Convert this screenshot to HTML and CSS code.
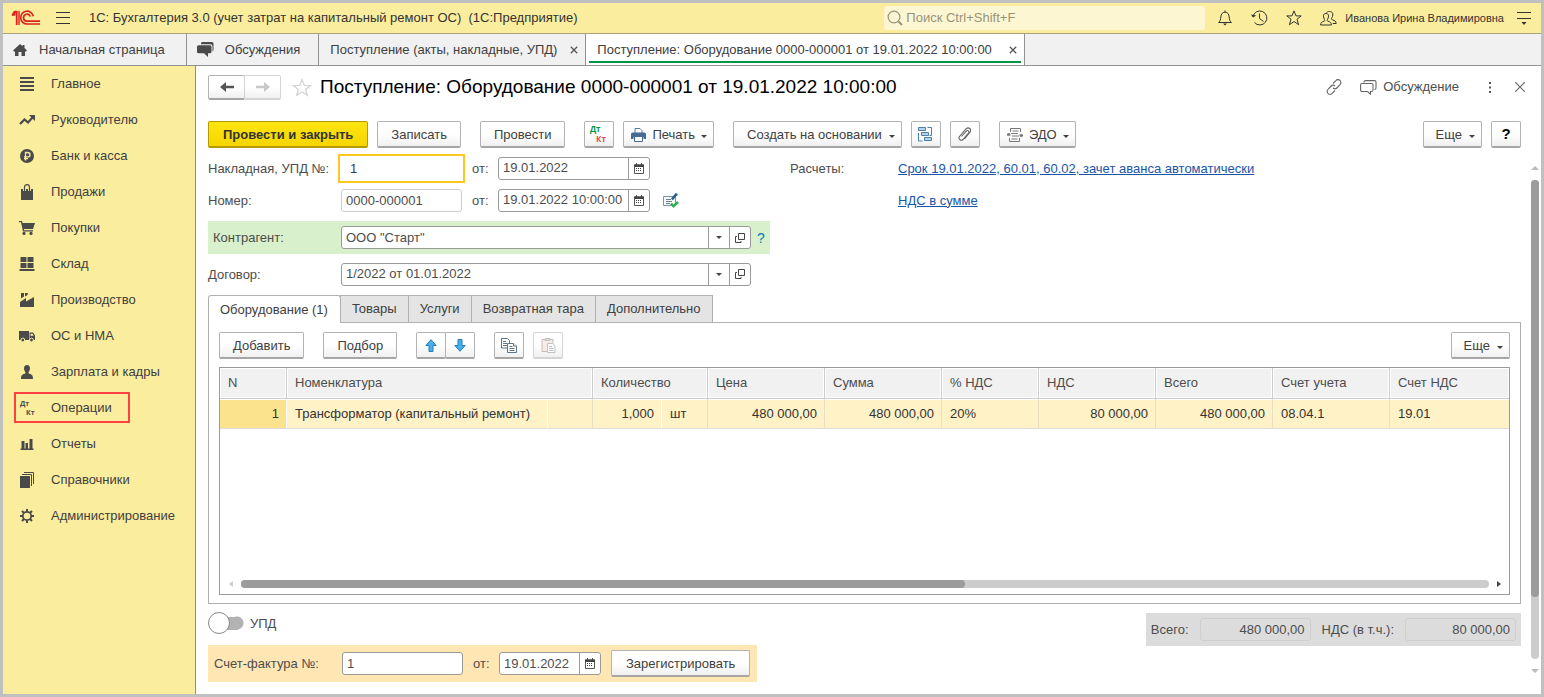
FILE: index.html
```html
<!DOCTYPE html>
<html lang="ru">
<head>
<meta charset="utf-8">
<title>1С: Бухгалтерия 3.0</title>
<link rel="stylesheet" href="styles.css">
</head>
<body>
<svg class="defs" aria-hidden="true">
  <symbol id="i-cal" viewBox="0 0 10 11"><path d="M.5 2h9v8.500h-9z" fill="none" stroke="#555"/><path d="M0 1.500h10v2.500H0zM2 0h1v2H2zM7 0h1v2H7z" fill="#444"/><path d="M2 5h1v1H2zM4 5h1v1H4zM6 5h1v1H6zM2 7h1v1H2zM4 7h1v1H4zM6 7h1v1H6z" fill="#444"/></symbol>
  <symbol id="i-open" viewBox="0 0 10 10"><path d="M3.500.5h6v6h-6zM2 3.500H.5v6h5.500V8" fill="none" stroke="#444"/></symbol>
  <symbol id="i-x" viewBox="0 0 8 8"><path d="M.8.8l6.400 6.400M7.200.8L.8 7.200" fill="none" stroke="#555" stroke-width="1.300"/></symbol>
</svg>
<div class="app">
  <header class="topbar">
    <svg class="logo" width="30" height="16" viewBox="0 0 30 16" fill="none" stroke="#d9231e"><path d="M.8 4.800h2.700v-3h2.200V15" stroke-width="1.800"/><path d="M8 .8v14.200" stroke-width="1.400"/><path d="M22.300 6.200A6.400 6.400 0 1 0 16 14h13" stroke-width="1.700"/><path d="M19.300 6.500A3.500 3.500 0 1 0 16 11.200h13" stroke-width="1.700"/><path d="M1.500 3.800L5.500.8" stroke-width="1.500"/></svg>
    <button class="bare" aria-label="Меню"><svg width="14" height="12" viewBox="0 0 14 12"><path d="M0 .5h14M0 5.500h14M0 11.500h14" stroke="#333"/></svg></button>
    <span class="app-name">1С: Бухгалтерия 3.0 (учет затрат на капитальный ремонт ОС)&nbsp; (1С:Предприятие)</span>
    <label class="search"><svg width="16" height="16" viewBox="0 0 16 16" fill="none" stroke="#999378" stroke-width="1.200"><circle cx="7" cy="7" r="5.900"/><path d="M11.500 11.500l3.500 3.500" stroke-width="2"/></svg><input type="search" aria-label="Поиск" placeholder="Поиск Ctrl+Shift+F"></label>
    <div class="top-icons">
      <button class="bare" aria-label="Уведомления"><svg width="16" height="16" viewBox="0 0 16 16" fill="none" stroke="#333"><path d="M8 .5v1.500M1.500 12.500h13c-2-1.500-2-3-2.300-5.500C12 4 10.500 2.200 8 2.200S4 4 3.800 7c-.3 2.500-.3 4-2.300 5.500z"/><path d="M6 13.500h4l-2 2z" fill="#333" stroke="none"/></svg></button>
      <button class="bare" aria-label="История"><svg width="17" height="16" viewBox="0 0 17 16" fill="none" stroke="#333"><path d="M2 6.500A7 7 0 1 1 3.500 12.500M8.500 3.500v5l4 3"/><path d="M0 4.500l2 3 3.300-2z" fill="#333" stroke="none"/></svg></button>
      <button class="bare" aria-label="Избранное"><svg width="16" height="16" viewBox="0 0 16 16" fill="none" stroke="#333"><path d="M8 .9l2 5h5.200l-4.200 3.300 1.600 5.500L8 11.500l-4.600 3.200L5 9.200.8 5.900H6z"/></svg></button>
      <button class="bare" aria-label="Пользователь"><svg width="17" height="15" viewBox="0 0 17 15" fill="none" stroke="#333"><path d="M.6 14c0-2.600 1.200-3 3.700-3.900.9-.4.500-1.200 0-2C2.800 5 3.300 2.500 6 2.500S9.200 5 7.700 8.100c-.5.800-.9 1.600 0 2 2.500.9 3.700 1.300 3.700 3.900z"/><path d="M6.500 1.500C8.500-.3 13.500.2 12.800 4c-.2 1.600-.5 2-1.100 3-.4.700-.3 1.400.5 1.700 2.700 1 3.900 1.300 4 3.800h-3.500"/></svg></button>
    </div>
    <span class="user">Иванова Ирина Владимировна</span>
    <button class="bare" aria-label="Настройки"><svg width="14" height="13" viewBox="0 0 14 13"><path d="M0 .5h14M0 6.500h14" stroke="#333"/><path d="M4.500 10h5L7 13z" fill="#333"/></svg></button>
  </header>

  <nav class="wintabs">
    <button class="wt wt-home"><svg width="14" height="12" viewBox="0 0 14 12" fill="#4a4a4a"><path d="M7 0L0 6.500 1 7.500h1V12h3.500V8h3v4H12V7.500h1l1-1L11.500 4V1h-2v1.200z"/></svg>Начальная страница</button>
    <button class="wt wt-talk"><svg width="17" height="15" viewBox="0 0 17 15" fill="#4a4a4a"><path d="M4 1.200Q4.200 0 5.500 0H15q1.500 0 1.500 1.500V8q0 1-1 1.400V4.500q0-2.300-2.300-2.300H4z"/><path d="M1.500 3.200H13q1.500 0 1.500 1.500v5q0 1.500-1.500 1.500h-2V15L7 11.200H1.500Q0 11.200 0 9.700v-5q0-1.500 1.500-1.500z"/></svg>Обсуждения</button>
    <button class="wt wt-list">Поступление (акты, накладные, УПД)<svg width="8" height="8"><use href="#i-x"/></svg></button>
    <button class="wt wt-on">Поступление: Оборудование 0000-000001 от 19.01.2022 10:00:00<svg width="8" height="8"><use href="#i-x"/></svg></button>
  </nav>

  <div class="body">
    <nav class="side">
      <a href="#"><svg width="14" height="14" viewBox="0 0 14 14"><path d="M0 1h14M0 5h14M0 9h14M0 13h14" stroke="#4a4a4a" stroke-width="2"/></svg>Главное</a>
      <a href="#"><svg width="16" height="10" viewBox="0 0 16 10"><path d="M1 9l4.500-4.500 3.500 3 5-5.500" fill="none" stroke="#4a4a4a" stroke-width="2.200"/><path d="M10 0h6v6z" fill="#4a4a4a"/></svg>Руководителю</a>
      <a href="#"><svg width="14" height="14" viewBox="0 0 14 14"><circle cx="7" cy="7" r="7" fill="#4a4a4a"/><path d="M5.500 11.500v-8h2.300a2.200 2.200 0 0 1 0 4.400H4M4 9.700h4" fill="none" stroke="#fbed9e" stroke-width="1.300"/></svg>Банк и касса</a>
      <a href="#"><svg width="12" height="16" viewBox="0 0 12 16"><path d="M0 5h12v11H0z" fill="#4a4a4a"/><path d="M3.500 7V3.500Q3.500 1 6 1t2.500 2.500V7" fill="none" stroke="#fbed9e" stroke-width="3"/><path d="M3.500 7.500v-4Q3.500.7 6 .7t2.500 2.800v4" fill="none" stroke="#4a4a4a" stroke-width="1.200"/></svg>Продажи</a>
      <a href="#"><svg width="16" height="14" viewBox="0 0 16 14" fill="#4a4a4a"><path d="M0 0h3l.6 2H16l-2 6H4.800l.3 1.200H14v1.300H4L2 1.300H0z"/><circle cx="5" cy="12.400" r="1.600"/><circle cx="12" cy="12.400" r="1.600"/></svg>Покупки</a>
      <a href="#"><svg width="15" height="14" viewBox="0 0 15 14" fill="#4a4a4a"><path d="M1 0h6v5H1zM8 0h6v5H8zM1 6h6v5H1zM8 6h6v5H8zM0 12h15v2H0z"/></svg>Склад</a>
      <a href="#"><svg width="14" height="14" viewBox="0 0 14 14" fill="#4a4a4a"><path d="M0 14V9l6-4v3.500L14 4v10zM1 0h3v3.500L1 5.500zM5 0h3L7.500 2 5 3.500z"/></svg>Производство</a>
      <a href="#"><svg width="16" height="12" viewBox="0 0 16 12"><path d="M0 1h10v9H0zM10.500 2.500H14l2 3V10h-5.500z" fill="#4a4a4a"/><path d="M11.500 3.700h2l1.200 2h-3.200z" fill="#fbed9e"/><g fill="#4a4a4a" stroke="#fbed9e"><circle cx="3.800" cy="10" r="1.900"/><circle cx="12.500" cy="10" r="1.900"/></g></svg>ОС и НМА</a>
      <a href="#"><svg width="12" height="14" viewBox="0 0 12 14" fill="#4a4a4a"><path d="M6 0c2 0 3 1.300 3 3.200S7.700 7 7.500 7.500s.2.900.8 1.200c2.500.8 3.700 1.300 3.700 5.300H0c0-4 1.200-4.500 3.700-5.300.6-.3 1-.7.8-1.200S3 5.100 3 3.200 4 0 6 0z"/></svg>Зарплата и кадры</a>
      <a href="#" class="marked"><svg class="dk" width="16" height="18" viewBox="0 0 16 18"><text x="1" y="7">Дт</text><text x="7" y="16">Кт</text></svg>Операции</a>
      <a href="#"><svg width="13" height="12" viewBox="0 0 13 12" fill="#4a4a4a"><path d="M0 10.500h13V12H0zM1 3h3v8H1zM5 5h2.500v6H5zM9 1h3v10H9z"/></svg>Отчеты</a>
      <a href="#"><svg width="14" height="16" viewBox="0 0 14 16"><path d="M0 4h10v12H0z" fill="#4a4a4a"/><path d="M2 2.500h9.500V14M4 .5h9.500V12" fill="none" stroke="#4a4a4a"/></svg>Справочники</a>
      <a href="#"><svg width="14" height="14" viewBox="0 0 14 14" fill="none" stroke="#4a4a4a"><circle cx="7" cy="7" r="4.200" stroke-width="1.800"/><path d="M7 0v2.500M7 11.500V14M0 7h2.500M11.500 7H14M2 2l2 2M10 10l2 2M12 2l-2 2M4 10l-2 2" stroke-width="2"/></svg>Администрирование</a>
    </nav>

    <main class="main">
      <div class="head">
        <div class="pair nav-pair">
          <button class="btn" aria-label="Назад"><svg width="14" height="10" viewBox="0 0 14 10"><path d="M0 5l6-5v3.700h8v2.600H6V10z" fill="#555"/></svg></button>
          <button class="btn dim" aria-label="Вперед"><svg width="14" height="10" viewBox="0 0 14 10"><path d="M14 5L8 0v3.700H0v2.600h8V10z" fill="#c8c8c8"/></svg></button>
        </div>
        <button class="bare star" aria-label="В избранное"><svg width="20" height="19" viewBox="0 0 20 19" fill="none" stroke="#d4d4d4" stroke-width="1.300"><path d="M10 1.500l2.300 5.800 6.200.2-4.900 3.900 1.800 6L10 14l-5.400 3.400 1.800-6L1.500 7.500l6.200-.2z"/></svg></button>
        <h1>Поступление: Оборудование 0000-000001 от 19.01.2022 10:00:00</h1>
        <div class="head-right">
          <button class="bare" aria-label="Ссылка"><svg width="16" height="16" viewBox="0 0 16 16" fill="none" stroke="#666" stroke-width="1.100"><path d="M7 4.500L9.700 1.800a2.700 2.700 0 0 1 4.500 0c1 1.500.7 2.900-.2 3.900L10.800 9c-1.200 1.200-2.800 1-3.800 0M9 11.500l-2.700 2.700a2.700 2.700 0 0 1-4.500 0c-1-1.500-.7-2.900.2-3.900L5.200 7c1.200-1.200 2.800-1 3.800 0"/></svg></button>
          <button class="bare talk"><svg width="17" height="15" viewBox="0 0 17 15" fill="none" stroke="#666" stroke-width="1.100"><path d="M4 2.500Q4 .6 5.500.6h9q1.500 0 1.500 1.500V8q0 1.500-1.500 1.500"/><path d="M2 3.500h9.500q1.500 0 1.500 1.500v5q0 1.500-1.500 1.500H10.500v2.700L7.500 11.500H2Q.6 11.500.6 10V5Q.6 3.500 2 3.500z"/></svg>Обсуждение</button>
          <button class="bare dots" aria-label="Еще"><svg width="3" height="11" viewBox="0 0 3 11" fill="#555"><path d="M0 0h2v2H0zM0 4.500h2v2H0zM0 9h2v2H0z"/></svg></button>
          <button class="bare" aria-label="Закрыть"><svg width="10" height="10" viewBox="0 0 10 10"><path d="M0 0l10 10M10 0L0 10" stroke="#666" stroke-width="1.100"/></svg></button>
        </div>
      </div>

      <div class="tools">
        <button class="btn main-btn">Провести и закрыть</button>
        <button class="btn">Записать</button>
        <button class="btn gap">Провести</button>
        <button class="btn icon gap" aria-label="Дт Кт"><svg class="dk dk-col" width="18" height="20" viewBox="0 0 18 20"><text x="0" y="8">Дт</text><text class="kt" x="6" y="18">Кт</text></svg></button>
        <button class="btn drop with-icon"><svg width="15" height="14" viewBox="0 0 15 14"><path d="M4 5V.5h5L11 2.500V5" fill="#fff" stroke="#5b7a99"/><path d="M1.500 4.500h12Q15 4.500 15 6v5h-2.500V9h-10v2H0V6q0-1.500 1.500-1.500z" fill="#456b93"/><path d="M3.500 8.500h8v5h-8z" fill="#fff" stroke="#456b93"/></svg>Печать</button>
        <button class="btn drop gap">Создать на основании</button>
        <button class="btn icon" aria-label="Структура"><svg width="15" height="15" viewBox="0 0 15 15" fill="none" stroke="#4d7fa8"><path d="M.5.5h7v3h-7zM3.500 5.500h7v3h-7zM6.500 10.500h7v3h-7z" fill="#b5d3ec"/><path d="M9.500.500h4v8h-2M.5 6v8h4"/></svg></button>
        <button class="btn icon" aria-label="Файлы"><svg width="13" height="15" viewBox="0 0 13 15" fill="none" stroke="#666" stroke-width="1.100"><path d="M3.500 9.500L8.500 4q1.300-1 2 0t0 2L5 12.500q-1.500 1.300-3 .2t-.7-3L8 2q2-2 3.700-.5t.3 3.700L6.500 12"/></svg></button>
        <button class="btn drop with-icon gap"><svg width="16" height="14" viewBox="0 0 16 14" fill="none" stroke="#777"><path d="M3.500 4V.5h10V4M2.500 10v3.500h10V10M5.500 3h6M4 5.500h7M5 8h7M4.500 11h6"/><path d="M0 6.500h3M13 7.500h3" stroke-width="2"/><path d="M0 7.500l2-3 2 3zM12 6.500l2 3 2-3z" fill="#777" stroke="none"/></svg>ЭДО</button>
        <span class="push"></span>
        <button class="btn drop more">Еще</button>
        <button class="btn icon q" aria-label="Справка">?</button>
      </div>

      <div class="work">
        <div class="form">
          <div class="row">
            <div class="left">
              <label class="lbl" for="f1">Накладная, УПД №:</label>
              <input class="box short focus" id="f1" value="1">
              <label class="ot" for="f2">от:</label>
              <div class="field date"><input id="f2" value="19.01.2022"><button aria-label="Календарь"><svg width="10" height="11"><use href="#i-cal"/></svg></button></div>
            </div>
            <span class="rlbl">Расчеты:</span>
            <a class="link" href="#">Срок 19.01.2022, 60.01, 60.02, зачет аванса автоматически</a>
          </div>
          <div class="row">
            <div class="left">
              <label class="lbl" for="f3">Номер:</label>
              <input class="box short pale" id="f3" value="0000-000001">
              <label class="ot" for="f4">от:</label>
              <div class="field date"><input id="f4" value="19.01.2022 10:00:00"><button aria-label="Календарь"><svg width="10" height="11"><use href="#i-cal"/></svg></button></div>
              <svg class="posted" width="16" height="15" viewBox="0 0 16 15"><path d="M.5 3.500h12v9H.5z" fill="#f4f8fb" stroke="#7d95a8"/><path d="M3 6.500h5M3 8.500h6M3 10.500h4" stroke="#6c7f8f"/><path d="M9 6.500l4-5" stroke="#25608f" stroke-width="2.600"/><path d="M12.500 0L15 1l-1 2-2-1.500z" fill="#25608f"/><path d="M8 10.500l2.500 2.700L15 9" fill="none" stroke="#2bb24c" stroke-width="2.400"/></svg>
            </div>
            <span class="rlbl"></span>
            <a class="link" href="#">НДС в сумме</a>
          </div>
          <div class="band">
            <label class="lbl" for="f5">Контрагент:</label>
            <div class="field wide"><input id="f5" value="ООО &quot;Старт&quot;"><button aria-label="Выбрать"><i class="tri"></i></button><button aria-label="Открыть"><svg width="10" height="10"><use href="#i-open"/></svg></button></div>
            <a class="help" href="#">?</a>
          </div>
          <div class="row last">
            <label class="lbl" for="f6">Договор:</label>
            <div class="field wide"><input id="f6" value="1/2022 от 01.01.2022"><button aria-label="Выбрать"><i class="tri"></i></button><button aria-label="Открыть"><svg width="10" height="10"><use href="#i-open"/></svg></button></div>
          </div>

          <div class="tabs" role="tablist">
            <button role="tab" aria-selected="true">Оборудование (1)</button>
            <button role="tab">Товары</button>
            <button role="tab">Услуги</button>
            <button role="tab">Возвратная тара</button>
            <button role="tab">Дополнительно</button>
          </div>
          <section class="panel">
            <div class="tools">
              <button class="btn">Добавить</button>
              <button class="btn gap">Подбор</button>
              <div class="pair gap">
                <button class="btn icon" aria-label="Вверх"><svg width="12" height="13" viewBox="0 0 12 13"><path d="M6 .7l5.200 5.800H8v6H4v-6H.8z" fill="#45b0ea" stroke="#2a7db3"/></svg></button>
                <button class="btn icon" aria-label="Вниз"><svg width="12" height="13" viewBox="0 0 12 13"><path d="M6 12.300L.8 6.500H4v-6h4v6h3.200z" fill="#45b0ea" stroke="#2a7db3"/></svg></button>
              </div>
              <button class="btn icon gap" aria-label="Копировать"><svg width="16" height="15" viewBox="0 0 16 15" fill="#fff" stroke="#5f7484"><path d="M.5.5h6l2 2v7.500h-8z"/><path d="M2 3.500h3M2 5.500h4M2 7.500h4"/><path d="M6.500 5.500h6l3 2.500v6.500h-9z"/><path d="M8.500 8.500h3M8.500 10.500h5M8.500 12.500h5M12.500 5.500V8h3"/></svg></button>
              <button class="btn icon dim" aria-label="Вставить"><svg width="15" height="15" viewBox="0 0 15 15" fill="#fff" stroke="#c2c2c2"><path d="M1 1.500h11v12H1z" fill="#f3ece8" stroke="#cbbcb3"/><path d="M4 .5h5v2H4z" fill="#ddd"/><path d="M6.500 5.500h5l2.500 2.500v6.500H6.500z"/><path d="M8 8.500h3M8 10.500h4.500M8 12.500h4.500"/></svg></button>
              <span class="push"></span>
              <button class="btn drop more">Еще</button>
            </div>
            <div class="grid">
              <table>
                <colgroup><col class="c-n"><col class="c-name"><col class="c-x"><col class="c-qty"><col class="c-unit"><col class="c-m"><col class="c-m"><col class="c-p"><col class="c-m"><col class="c-m"><col class="c-m"><col></colgroup>
                <thead><tr><th>N</th><th colspan="2">Номенклатура</th><th colspan="2">Количество</th><th>Цена</th><th>Сумма</th><th>% НДС</th><th>НДС</th><th>Всего</th><th>Счет учета</th><th>Счет НДС</th></tr></thead>
                <tbody><tr><td class="num cur">1</td><td>Трансформатор (капитальный ремонт)</td><td class="end"></td><td class="num">1,000</td><td class="end">шт</td><td class="num">480 000,00</td><td class="num">480 000,00</td><td>20%</td><td class="num">80 000,00</td><td class="num">480 000,00</td><td>08.04.1</td><td>19.01</td></tr></tbody>
              </table>
              <div class="hscroll"><i class="al"></i><div class="track"><div class="thumb"></div></div><i class="ar"></i></div>
            </div>
          </section>

          <footer class="foot">
            <div>
              <label class="toggle"><input type="checkbox"><span>УПД</span></label>
              <div class="invoice">
                <label class="ilbl" for="f7">Счет-фактура №:</label>
                <input class="box short" id="f7" value="1">
                <label class="ot" for="f8">от:</label>
                <div class="field sdate"><input id="f8" value="19.01.2022"><button aria-label="Календарь"><svg width="10" height="11"><use href="#i-cal"/></svg></button></div>
                <button class="btn">Зарегистрировать</button>
              </div>
            </div>
            <div class="totals">
              <label for="t1">Всего:</label><input id="t1" readonly value="480 000,00">
              <label for="t2">НДС (в т.ч.):</label><input id="t2" readonly value="80 000,00">
            </div>
          </footer>
        </div>
        <div class="vscroll"><i class="au"></i><div class="track"><div class="thumb"></div></div><i class="ad"></i></div>
      </div>
    </main>
  </div>
</div>
</body>
</html>
```
FILE: styles.css
```css
* { box-sizing: border-box; }
body { margin: 0; font: 13px/16px "Liberation Sans", Arial, sans-serif; color: #4d4d4d; background: #fff; }
button, input { font: inherit; color: inherit; margin: 0; }
input { min-width: 0; }
svg { display: block; flex: none; }
.defs { position: absolute; width: 0; height: 0; }
.bare { background: none; border: 0; padding: 0; display: flex; align-items: center; }

.app { min-height: 100vh; border: 3px solid #c0c0c0; display: flex; flex-direction: column; }

.topbar { height: 31px; background: #fbed9e; border-bottom: 1px solid #aca27a; display: flex; align-items: center; padding: 0 10px 0 8px; color: #333; }
.logo { margin-right: 15px; }
.app-name { margin-left: 19px; white-space: nowrap; }
.search { margin-left: auto; width: 321px; height: 24px; background: #fdf6d3; border-radius: 3px; display: flex; align-items: center; padding-left: 3px; gap: 3px; }
.search input { flex: 1; border: 0; background: none; padding: 0; outline: 0; }
.search input::placeholder { color: #999378; opacity: 1; }
.top-icons { display: flex; gap: 18px; margin: 0 8px 0 12px; }
.user { font-size: 11px; margin-right: 13px; white-space: nowrap; }

.wintabs { height: 32px; background: #f1f1f1; border-bottom: 1px solid #929292; display: flex; }
.wt { border: 0; border-right: 1px solid #929292; background: none; padding: 0 7px 0 11px; display: flex; align-items: center; gap: 8px; white-space: nowrap; color: #404040; }
.wt-home { padding: 0 21px 0 10px; gap: 12px; }
.wt-talk { padding: 0 18px 0 10px; gap: 11px; }
.wt svg:last-child { margin-left: auto; }
.wt-list { min-width: 267px; }
.wt-on { min-width: 439px; background: linear-gradient(#009646, #009646) 3px 27px / calc(100% - 6px) 2px no-repeat #fff; }

.body { flex: 1; display: flex; }
.side { width: 193px; flex: none; background: #fbed9e; border-right: 1px solid #9b9264; padding: 2px 0 0 11px; display: flex; flex-direction: column; align-items: flex-start; gap: 5px; }
.side a { height: 31px; display: flex; align-items: center; border: 2px solid transparent; padding-right: 16px; color: #404040; text-decoration: none; white-space: nowrap; }
.side a.marked { border-color: #ff4040; }
.side a svg { width: 22px; margin-right: 13px; }
.dk { overflow: visible; }
.dk text { font: bold 7px "Open Sans", sans-serif; fill: #4a4a4a; }
.dk-col text { font-size: 8px; fill: #009646; }
.dk-col .kt { fill: #dd4a4a; }

.main { flex: 1; min-width: 0; padding: 9px 0 12px 12px; display: flex; flex-direction: column; }
.head { display: flex; align-items: center; height: 24px; padding-right: 16px; }
.head h1 { margin: 0 0 0 8px; font-size: 19px; line-height: 24px; font-weight: normal; color: #000; white-space: nowrap; }
.star { margin-left: 11px; }
.head-right { margin-left: auto; display: flex; align-items: center; gap: 18px; }
.talk { gap: 6px; }
.dots { margin: 0 5px 0 12px; }

.btn { height: 27px; display: flex; align-items: center; justify-content: center; padding: 2px 13px 0; background: linear-gradient(#fff 50%, #f0f0f0); border: 1px solid #b3b3b3; border-bottom: 2px solid #a6a6a6; border-radius: 2px; white-space: nowrap; color: #404040; }
.btn.icon { width: 30px; padding: 0; }
.btn.dim { border-color: #d4d4d4; }
.btn.drop::after { content: ""; border: 3px solid transparent; border-top-color: #404040; border-bottom: 0; margin: 2px -7px 0 7px; }
.btn.with-icon { padding-left: 7px; gap: 6px; }
.btn.with-icon::after { margin-left: 0; }
.btn.more { padding-left: 12px; }
.btn.main-btn { padding: 2px 14px 0; background: linear-gradient(#ffe510, #f5d500); border-color: #b39b00; font-weight: bold; color: #333; }
.q { font-weight: bold; font-size: 15px; color: #000; }
.pair { display: flex; }
.pair .btn + .btn { margin-left: -1px; }
.nav-pair .btn { height: 25px; width: 37px; padding: 0; }
.tools { display: flex; align-items: center; gap: 9px; }
.tools .gap { margin-left: 10px; }
.push { flex: 1; }
.main > .tools { margin: 22px 20px 0 0; }

.work { flex: 1; display: flex; gap: 10px; margin-right: 2px; padding-top: 4px; }
.form { flex: 1; min-width: 0; display: flex; flex-direction: column; }
.row, .left, .band, .invoice { display: flex; align-items: center; }
.row { height: 32px; }
.left { width: 582px; }
.lbl { width: 133px; white-space: nowrap; }
.row .lbl, .rlbl, .link, .ot { padding-top: 1px; }
.rlbl { width: 108px; }
.link { color: #1a55a8; }
.box, .field { height: 23px; border: 1px solid #9a9a9a; border-radius: 3px; background: #fff; }
.box { padding: 0 4px; }
.short { width: 121px; }
.pale { border-color: #cdcdcd; }
.focus { border-color: transparent; border-radius: 0; padding-left: 8px; outline: 2px solid #fac81e; outline-offset: 1px; color: #333366; }
.ot { width: 36px; padding-left: 10px; }
.field { display: flex; overflow: hidden; }
.field input { flex: 1; border: 0; padding: 0 4px; background: none; }
.field button { width: 21px; border: 0; border-left: 1px solid #9a9a9a; background: none; padding: 0; display: flex; align-items: center; justify-content: center; }
.date { width: 152px; }
.wide { width: 410px; }
.sdate { width: 102px; }
.posted { margin-left: 13px; }
.tri { border: 3px solid transparent; border-top-color: #444; border-bottom: 0; }
.band { width: 562px; height: 33px; margin-top: 5px; padding-left: 5px; background: #d8f0cb; }
.band .lbl { width: 128px; }
.help { margin-left: 6px; color: #0a78b4; text-decoration: none; font-size: 14px; }
.last { margin-top: 4px; }

.tabs { display: flex; margin-top: 5px; position: relative; }
.tabs button { height: 27px; padding: 0 11px; border: 1px solid #b0b0b0; border-bottom: 0; margin-left: -1px; background: #e4e4e4; color: #404040; white-space: nowrap; }
.tabs button[aria-selected] { height: 28px; margin: 0 0 -1px; padding: 0 12px 0 11px; background: #fff; border-radius: 3px 3px 0 0; }
.panel { flex: 1; border: 1px solid #b0b0b0; padding: 9px 10px 8px; display: flex; flex-direction: column; }
.grid { flex: 1; min-height: 0; margin-top: 8px; border: 1px solid #9a9a9a; display: flex; flex-direction: column; overflow: hidden; }
table { width: 100%; table-layout: fixed; border-collapse: separate; border-spacing: 0; }
.c-n { width: 67px; } .c-name { width: 261px; } .c-x { width: 45px; }
.c-qty { width: 69px; } .c-unit { width: 46px; } .c-m { width: 117px; } .c-p { width: 97px; }
th { height: 31px; padding: 0 8px; text-align: left; font-weight: normal; background: #f1f1f1; border-right: 1px solid #ccc; border-bottom: 1px solid #ccc; box-shadow: inset 0 0 0 1px #fff; }
td { height: 30px; padding: 0 8px; background: #fff2c7; border-right: 1px solid #fff; border-bottom: 1px solid #ddd; white-space: nowrap; color: #333; box-shadow: inset 0 1px #fff; }
td + td:not(:nth-child(2)):not(:nth-child(4)) { border-right-color: #e8dfc0; }
th:last-child, td:last-child { border-right: 0; }
.num { text-align: right; padding-right: 7px; }
.cur { background: #fbe38d; }
.hscroll { margin-top: auto; display: flex; align-items: center; gap: 8px; padding: 0 8px 6px; }
.track { flex: 1; background: #ccc; border-radius: 4px; }
.thumb { background: #9c9c9c; border-radius: 4px; }
.hscroll .track { height: 8px; }
.hscroll .thumb { height: 8px; width: 58%; }
.al, .ar { border: 3px solid transparent; }
.al { border-right: 4px solid #ccc; border-left: 0; margin-left: 1px; }
.ar { border-left: 4px solid #444; border-right: 0; }

.foot { display: flex; justify-content: space-between; align-items: flex-start; margin-top: 9px; }
.toggle { display: flex; align-items: center; gap: 6px; height: 20px; }
.toggle input { appearance: none; width: 36px; height: 20px; display: flex; align-items: center; background: linear-gradient(#b3b3b3, #b3b3b3) 10px 4px / 20px 13px no-repeat, radial-gradient(circle at 29px 10px, #b3b3b3 6px, transparent 7px); }
.toggle input::before { content: ""; width: 20px; height: 20px; border: 1px solid #888; border-radius: 50%; background: #fff; }
.toggle span { padding-top: 1px; }
.invoice { height: 37px; width: 549px; margin-top: 12px; padding-left: 6px; background: #ffe6b3; }
.ilbl { width: 128px; }
.invoice .btn { margin-left: 10px; padding: 2px 14px 0; }
.totals { height: 33px; padding: 0 5px; display: flex; align-items: center; gap: 11px; background: #dcdcdc; }
.totals input { width: 111px; height: 23px; border: 1px solid #cfcfcf; border-radius: 3px; background: none; text-align: right; padding: 0 5px; }

.vscroll { width: 8px; display: flex; flex-direction: column; align-items: center; gap: 10px; padding: 14px 0 9px; }
.vscroll .track { width: 8px; }
.vscroll .thumb { height: 87%; }
.au, .ad { border: 4px solid transparent; }
.au { border-bottom: 4px solid #bbb; border-top: 0; }
.ad { border-top: 4px solid #bbb; border-bottom: 0; }
```
